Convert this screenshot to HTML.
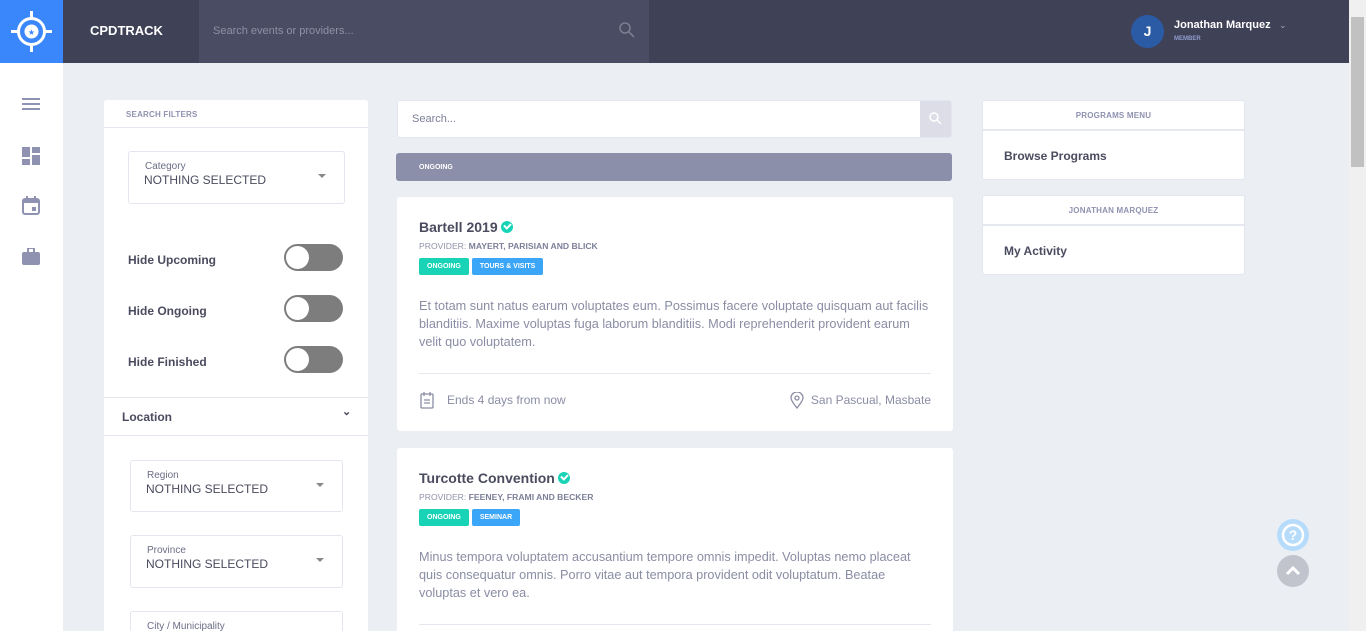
<!DOCTYPE html>
<html style="height:631px;overflow:hidden"><head><meta charset="utf-8"><style>
*{box-sizing:border-box;margin:0;padding:0}
body{width:1366px;height:631px;overflow:hidden;background:#ebeff4;font-family:"Liberation Sans",sans-serif;position:relative;color:#4a4b5e}
.top{position:absolute;left:0;top:0;width:1349px;height:63px;background:#3f4157}
.logo{position:absolute;left:0;top:0;width:63px;height:63px;background:#3a87fb}
.brand{position:absolute;left:90px;top:23px;color:#fff;font-weight:bold;font-size:13px}
.tsearch{position:absolute;left:199px;top:0;width:450px;height:63px;background:#4a4c63}
.tsearch span{position:absolute;left:14px;top:25px;font-size:11px;color:#8e90a6}
.side{position:absolute;left:0;top:63px;width:63px;height:568px;background:#fff}
.sb{position:absolute;left:1349px;top:0;width:17px;height:631px;background:#f0f0f0}
.sb div{position:absolute;left:2px;top:17px;width:13px;height:150px;background:#c1c1c1}
.card{position:absolute;background:#fff;border-radius:3px;overflow:hidden}
.hdr{font-size:8px;font-weight:bold;color:#8f92b0;letter-spacing:.2px}
.sel{position:absolute;border:1px solid #e3e6ee;border-radius:3px;background:#fff}
.sel .l{position:absolute;left:16px;top:9px;font-size:10px;color:#6b6e86}
.sel .v{position:absolute;left:15px;top:21px;font-size:12px;color:#4a4b5e}
.sel .c{position:absolute;right:18px;top:22px;width:0;height:0;border-left:4px solid transparent;border-right:4px solid transparent;border-top:4px solid #888}
.tg{position:absolute;left:24px;font-size:12px;font-weight:bold;color:#4a4b5e}
.sw{position:absolute;width:59px;height:27px;border-radius:14px;background:#7d7d7d}
.sw:after{content:"";position:absolute;left:2px;top:2px;width:23px;height:23px;border-radius:50%;background:#fff}
.ev h3{font-size:14px;font-weight:bold;color:#4a4b5e}
.chk{display:inline-block;width:12px;height:12px;border-radius:50%;background:#19d3b7;vertical-align:-1px;margin-left:3px;position:relative}
.chk:after{content:"";position:absolute;left:3px;top:2px;width:5px;height:3px;border-left:2px solid #fff;border-bottom:2px solid #fff;transform:rotate(-45deg)}
.prov{font-size:8.6px;color:#8f92a8;margin-top:6px}
.prov b{color:#7c7f98}
.badge{display:inline-block;font-size:7px;font-weight:bold;color:#fff;padding:5px 8px;border-radius:2px;margin-right:3px}
.desc{font-size:12.7px;line-height:18px;color:#8a8da4;margin-top:22px}
.ft{position:absolute;left:22px;right:22px;top:176px;border-top:1px solid #e6e8ef;font-size:12px;color:#8a8da4}
</style></head><body>
<div class="top">
 <div class="logo"><svg width="63" height="63" viewBox="0 0 63 63"><circle cx="31.5" cy="31.5" r="13" fill="none" stroke="#fff" stroke-width="3"/><circle cx="31.5" cy="31.5" r="7" fill="#fff"/><path d="M31.5 11v7M31.5 45v7M11 31.5h7M45 31.5h7" stroke="#fff" stroke-width="3"/><text x="31.5" y="35" font-size="8" fill="#3a87fb" text-anchor="middle">★</text></svg></div>
 <div class="brand">CPDTRACK</div>
 <div class="tsearch"><span>Search events or providers...</span><svg style="position:absolute;left:420px;top:22px" width="16" height="16"><circle cx="6" cy="6" r="5" fill="none" stroke="#7a7c92" stroke-width="1.6"/><path d="M10 10l5 5" stroke="#7a7c92" stroke-width="1.6"/></svg></div>
 <div style="position:absolute;left:1131px;top:15px;width:33px;height:33px;border-radius:50%;background:#2c5ba6;color:#fff;font-weight:bold;font-size:14px;text-align:center;line-height:33px">J</div>
 <div style="position:absolute;left:1174px;top:19px;color:#fff;font-weight:bold;font-size:11px">Jonathan Marquez</div>
 <div style="position:absolute;left:1174px;top:36px;color:#8f9ccc;font-weight:bold;font-size:6px">MEMBER</div>
 <div style="position:absolute;left:1279px;top:20px;color:#aaa;font-size:9px">⌄</div>
</div>
<div class="side">
 <svg style="position:absolute;left:22px;top:34px" width="18" height="14"><path d="M0 2h18M0 7h18M0 12h18" stroke="#8f92b0" stroke-width="2"/></svg>
 <svg style="position:absolute;left:22px;top:84px" width="18" height="18" fill="#8f92b0"><rect x="0" y="0" width="8" height="10"/><rect x="10" y="0" width="8" height="6"/><rect x="0" y="12" width="8" height="6"/><rect x="10" y="8" width="8" height="10"/></svg>
 <svg style="position:absolute;left:22px;top:133px" width="18" height="19"><rect x="1" y="3" width="16" height="15" rx="2" fill="none" stroke="#8f92b0" stroke-width="2"/><rect x="1" y="3" width="16" height="4" fill="#8f92b0"/><path d="M5 0v4M13 0v4" stroke="#8f92b0" stroke-width="2"/><rect x="10" y="11" width="4" height="4" fill="#8f92b0"/></svg>
 <svg style="position:absolute;left:22px;top:185px" width="18" height="17" fill="#8f92b0"><rect x="0" y="4" width="18" height="13" rx="2"/><rect x="6" y="0" width="6" height="5" rx="1" fill="none" stroke="#8f92b0" stroke-width="2"/></svg>
</div>
<div class="card" style="left:104px;top:100px;width:264px;height:531px;border-radius:3px 3px 0 0">
 <div class="hdr" style="position:absolute;left:22px;top:10px">SEARCH FILTERS</div>
 <div style="position:absolute;left:0;right:0;top:27px;border-top:1px solid #e3e6ee"></div>
 <div class="sel" style="left:24px;top:51px;width:217px;height:53px"><div class="l">Category</div><div class="v">NOTHING SELECTED</div><div class="c"></div></div>
 <div class="tg" style="top:153px">Hide Upcoming</div><div class="sw" style="left:180px;top:144px"></div>
 <div class="tg" style="top:204px">Hide Ongoing</div><div class="sw" style="left:180px;top:195px"></div>
 <div class="tg" style="top:255px">Hide Finished</div><div class="sw" style="left:180px;top:246px"></div>
 <div style="position:absolute;left:0;right:0;top:297px;border-top:1px solid #e3e6ee"></div>
 <div style="position:absolute;left:18px;top:310px;font-size:12px;font-weight:bold">Location</div>
 <div style="position:absolute;left:238px;top:305px;font-size:11px;font-weight:bold">⌄</div>
 <div style="position:absolute;left:0;right:0;top:335px;border-top:1px solid #e3e6ee"></div>
 <div class="sel" style="left:26px;top:360px;width:213px;height:52px"><div class="l">Region</div><div class="v">NOTHING SELECTED</div><div class="c"></div></div>
 <div class="sel" style="left:26px;top:435px;width:213px;height:53px"><div class="l">Province</div><div class="v">NOTHING SELECTED</div><div class="c"></div></div>
 <div class="sel" style="left:26px;top:511px;width:213px;height:53px"><div class="l">City / Municipality</div></div>
</div>
<div class="card" style="left:397px;top:100px;width:555px;height:38px;border:1px solid #e3e6ee">
 <div style="position:absolute;left:14px;top:12px;font-size:11px;color:#7c7f98">Search...</div>
 <div style="position:absolute;right:0;top:0;width:31px;height:36px;background:#dcdde6"><svg style="position:absolute;left:9px;top:11px" width="13" height="13"><circle cx="5" cy="5" r="4" fill="none" stroke="#fff" stroke-width="1.5"/><path d="M8 8l4 4" stroke="#fff" stroke-width="1.5"/></svg></div>
</div>
<div style="position:absolute;left:396px;top:153px;width:556px;height:28px;background:#8c8fa9;border-radius:3px;color:#fff;font-size:7px;font-weight:bold;padding:11px 0 0 23px">ONGOING</div>
<div class="card ev" style="left:397px;top:197px;width:556px;height:234px;padding:22px">
 <h3>Bartell 2019<span class="chk"></span></h3>
 <div class="prov">PROVIDER: <b>MAYERT, PARISIAN AND BLICK</b></div>
 <div style="margin-top:4px"><span class="badge" style="background:#19d3b7">ONGOING</span><span class="badge" style="background:#3ba5f7">TOURS &amp; VISITS</span></div>
 <div class="desc">Et totam sunt natus earum voluptates eum. Possimus facere voluptate quisquam aut facilis blanditiis. Maxime voluptas fuga laborum blanditiis. Modi reprehenderit provident earum velit quo voluptatem.</div>
 <div class="ft"><svg style="position:absolute;left:1px;top:18px" width="14" height="17"><rect x="1" y="2" width="12" height="14" rx="1" fill="none" stroke="#8a8da4" stroke-width="1.3"/><path d="M4 0v4M10 0v4M4 8h6M4 11h6" stroke="#8a8da4" stroke-width="1.3"/></svg><span style="position:absolute;left:28px;top:19px">Ends 4 days from now</span>
 <svg style="position:absolute;right:127px;top:18px" width="14" height="17"><path d="M7 16C3 11 1 8 1 6a6 6 0 0112 0c0 2-2 5-6 10z" fill="none" stroke="#8a8da4" stroke-width="1.3"/><circle cx="7" cy="6" r="2" fill="none" stroke="#8a8da4" stroke-width="1.3"/></svg><span style="position:absolute;right:0;top:19px">San Pascual, Masbate</span></div>
</div>
<div class="card ev" style="left:397px;top:448px;width:556px;height:183px;padding:22px;border-radius:3px 3px 0 0">
 <h3>Turcotte Convention<span class="chk"></span></h3>
 <div class="prov">PROVIDER: <b>FEENEY, FRAMI AND BECKER</b></div>
 <div style="margin-top:4px"><span class="badge" style="background:#19d3b7">ONGOING</span><span class="badge" style="background:#3ba5f7">SEMINAR</span></div>
 <div class="desc">Minus tempora voluptatem accusantium tempore omnis impedit. Voluptas nemo placeat quis consequatur omnis. Porro vitae aut tempora provident odit voluptatum. Beatae voluptas et vero ea.</div>
 <div class="ft"></div>
</div>
<div class="card" style="left:982px;top:100px;width:263px;height:80px;border:1px solid #e3e6ee">
 <div class="hdr" style="text-align:center;margin-top:10px">PROGRAMS MENU</div>
 <div style="border-top:2px solid #e6e8ef;margin-top:9px"></div>
 <div style="position:absolute;left:21px;top:48px;font-size:12px;font-weight:bold">Browse Programs</div>
</div>
<div class="card" style="left:982px;top:195px;width:263px;height:80px;border:1px solid #e3e6ee">
 <div class="hdr" style="text-align:center;margin-top:10px">JONATHAN MARQUEZ</div>
 <div style="border-top:2px solid #e6e8ef;margin-top:9px"></div>
 <div style="position:absolute;left:21px;top:48px;font-size:12px;font-weight:bold">My Activity</div>
</div>
<div style="position:absolute;left:1277px;top:519px;width:32px;height:32px;border-radius:50%;background:#b7dcfb"><svg width="32" height="32"><circle cx="16" cy="16" r="10" fill="none" stroke="#fff" stroke-width="2.5"/><text x="16" y="21" font-size="14" font-weight="bold" fill="#fff" text-anchor="middle" font-family="Liberation Sans">?</text></svg></div>
<div style="position:absolute;left:1277px;top:555px;width:32px;height:32px;border-radius:50%;background:#c2c4cd"><svg width="32" height="32"><path d="M10 19l6-6 6 6" fill="none" stroke="#fff" stroke-width="3"/></svg></div>
<div class="sb"><div></div></div>
</body></html>
